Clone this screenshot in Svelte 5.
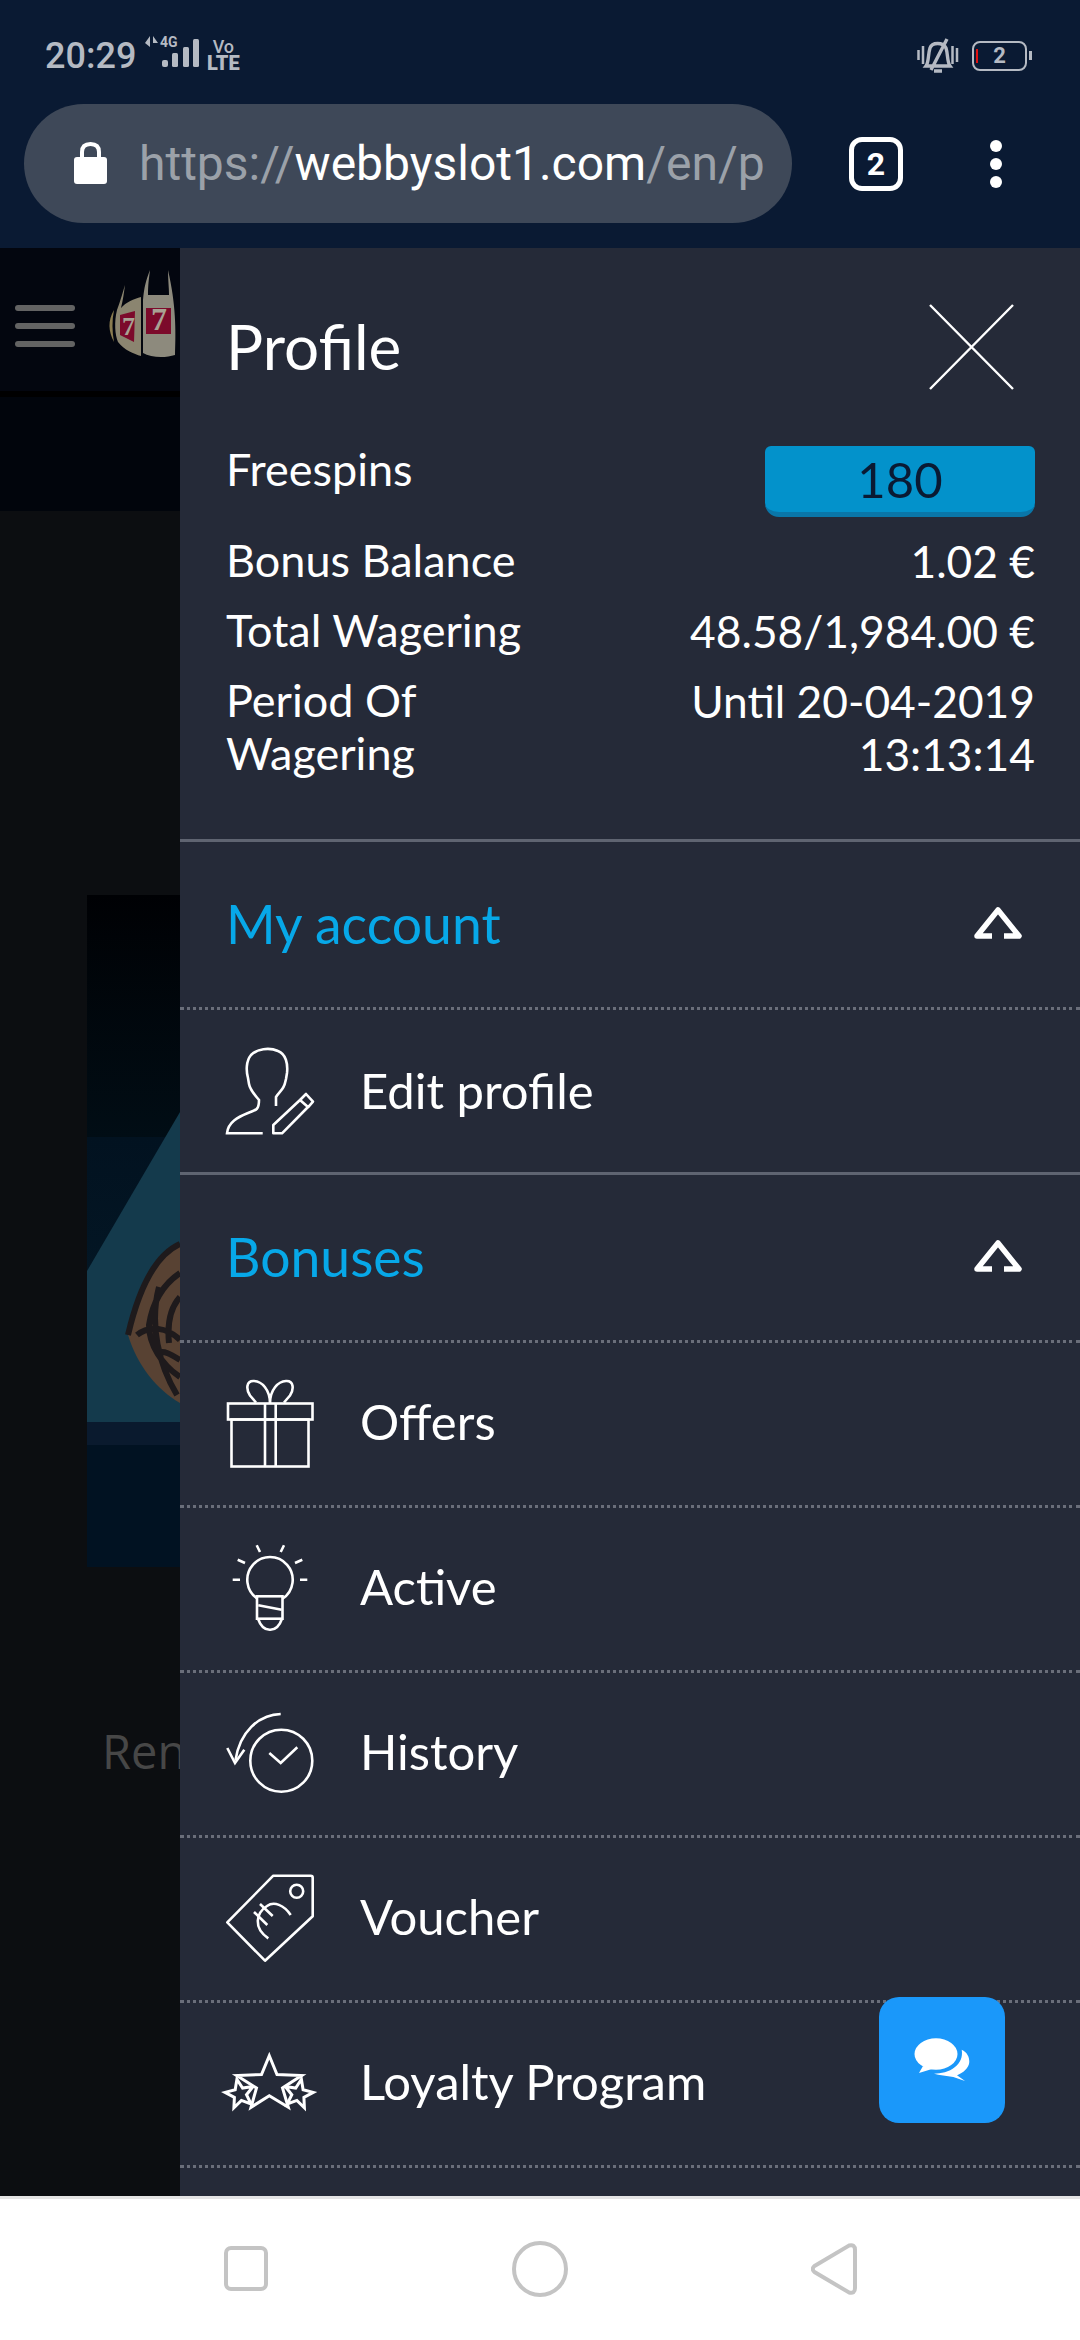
<script>
  function star(cx, cy, R, r, rot) {
    const pts = [];
    for (let i = 0; i < 10; i++) {
      const a = ((-90 + rot + i * 36) * Math.PI) / 180;
      const d = i % 2 ? r : R;
      pts.push((cx + d * Math.cos(a)).toFixed(1) + ',' + (cy + d * Math.sin(a)).toFixed(1));
    }
    return pts.join(' ');
  }
  const stats = [
    ['Bonus Balance', ['1.02 €']],
    ['Total Wagering', ['48.58/1,984.00 €']],
    ['Period Of Wagering', ['Until 20-04-2019', '13:13:14']]
  ];
</script>

<div class="screen">
  <header class="chrome">
    <div class="status">
      <span class="time">20:29</span>
      <svg class="signal" width="60" height="40" viewBox="0 0 60 40">
        <path d="M3 10 8 3V14ZM11 3 16 10 11 10ZM10 3V14" fill="#b5bac3" />
        <text x="18" y="14" class="net">4G</text>
        <rect x="20" y="27" width="6" height="7" rx="2" fill="#b5bac3" />
        <rect x="30" y="20" width="6" height="14" rx="1.5" fill="#b5bac3" />
        <rect x="41" y="14" width="6" height="20" rx="1.5" fill="#b5bac3" />
        <rect x="51" y="6" width="6" height="28" rx="1.5" fill="#b5bac3" />
      </svg>
      <span class="volte"><span>Vo</span><b>LTE</b></span>
      <span class="spacer"></span>
      <svg class="bell" width="42" height="36" viewBox="0 0 42 36">
        <path d="M1.5 12V22M40 10V24M6 8V26M35.5 8V26" stroke="#b5bac3" stroke-width="2.5" fill="none" />
        <path d="M9 28C12 24 11 16 13 10 15 4 26 4 29 10 31 16 30 24 33 28ZM14 32 30 1M17 33H25" stroke="#b5bac3" stroke-width="3.4" fill="none" />
      </svg>
      <span class="battery"><i></i>2</span>
      <span class="nub"></span>
    </div>
    <div class="urlrow">
      <div class="pill">
        <svg class="lock" width="33" height="42" viewBox="0 0 33 42">
          <path d="M8 16V10C8 4 12 2 16.5 2S25 4 25 10V16" fill="none" stroke="#fff" stroke-width="4" />
          <rect y="15" width="33" height="27" rx="3" fill="#fff" />
        </svg>
        <span class="url"><span class="dim">https://</span>webbyslot1.com<span class="dim">/en/p</span></span>
      </div>
      <span class="tabs">2</span>
      <span class="dots"><i></i><i></i><i></i></span>
    </div>
  </header>

  <main class="stage">
    <div class="page">
      <div class="site-head">
        <span class="burger"><i></i><i></i><i></i></span>
        <svg class="logo" width="72" height="90" viewBox="0 0 72 90">
          <path d="M8 40Q-1 55 8 72 5 55 8 40Z" fill="#8a7c50" />
          <path d="M19 15C16 25 14 32 11 40 8 52 9 65 12 72 18 80 28 84 35 86L35 27C28 29 20 32 15 38 17 30 18 22 19 15Z" fill="#8b8570" />
          <path d="M14 45 29 41 28 72 14 65Z" fill="#7c0a2b" />
          <path d="M44 0C40 10 38 18 37 30L37 83C45 88 60 88 69 85 70 60 70 35 62 0 62 10 63 18 63 25L42 25C42 15 43 8 44 0Z" fill="#8d8a7d" />
          <rect x="40" y="38" width="25" height="26" fill="#7c0a2b" />
          <text x="16" y="65" class="seven">7</text>
          <text x="45" y="60" class="seven big">7</text>
        </svg>
      </div>
      <div class="site-band"></div>
      <div class="hero">
        <svg width="93" height="672" viewBox="0 0 93 672">
          <defs>
            <linearGradient id="sky" x1="0" y1="0" x2="0" y2="1">
              <stop offset="0" stop-color="#000104" />
              <stop offset="0.64" stop-color="#010d15" />
              <stop offset="0.641" stop-color="#021220" />
              <stop offset="1" stop-color="#031624" />
            </linearGradient>
          </defs>
          <rect width="93" height="378" fill="url(#sky)" />
          <path d="M0 376 93 217V527H0Z" fill="#143a4c" />
          <rect y="527" width="93" height="23" fill="#0a1a2e" />
          <rect y="550" width="93" height="122" fill="#011222" />
          <path d="M93 349C75 357 55 380 41 440 50 470 70 495 93 508Z" fill="#584233" />
          <path d="M93 349C75 357 55 380 41 440M93 378C78 388 66 405 62 430 62 450 75 470 93 482M93 402C84 412 80 428 82 448M50 440C62 430 80 432 93 445M72 392C62 430 72 470 90 500M93 465C85 460 78 455 70 458" fill="none" stroke="#1e1a1c" stroke-width="6" />
        </svg>
      </div>
      <p class="ren">Rent</p>
    </div>

    <aside class="drawer">
      <div class="profile">
        <div class="title-row">
          <h1>Profile</h1>
          <svg class="close" width="85" height="86" viewBox="0 0 85 86">
            <path d="M1 1 84 85M84 1 1 85" stroke="#fff" stroke-width="2.4" fill="none" />
          </svg>
        </div>
        <dl class="stats">
          <div class="stat">
            <dt>Freespins</dt>
            <dd class="badge">180</dd>
          </div>
          {#each stats as [label, values]}
            <div class="stat">
              <dt>{label}</dt>
              <dd>{#each values as v}<span>{v}</span>{/each}</dd>
            </div>
          {/each}
        </dl>
      </div>

      <section>
        <div class="sec-head">
          <h2>My account</h2>
          <svg width="48" height="32" viewBox="0 0 48 32">
            <path d="M18 29H3L24 3 45 29H30" fill="none" stroke="#fff" stroke-width="5.5" stroke-linejoin="round" />
          </svg>
        </div>
        <a class="item last">
          <svg class="ico" width="90" height="90" viewBox="0 0 90 90">
            <path d="M36.7 87.3H1C2 76 12 71 22 67 31 64 33 63 33 54 28 48 24 44 23 38L22 32C20 25 20 15 25 9 31 3 43 1 52 5 60 8 62 18 61 27L60 33 59 37C58 43 53 46 50 51V60" />
            <path d="M47.3 87.3V79L74 54 82 61 56 87.3ZM74 54 80 48 87 55.7 82 61.3" stroke-linejoin="round" />
          </svg>
          <span>Edit profile</span>
        </a>
      </section>

      <section>
        <div class="sec-head">
          <h2>Bonuses</h2>
          <svg width="48" height="32" viewBox="0 0 48 32">
            <path d="M18 29H3L24 3 45 29H30" fill="none" stroke="#fff" stroke-width="5.5" stroke-linejoin="round" />
          </svg>
        </div>
        <a class="item">
          <svg class="ico" width="90" height="90" viewBox="0 -1.5 90 90">
            <rect x="2" y="24" width="84.5" height="16" />
            <rect x="5.5" y="40" width="77" height="47" />
            <path d="M39 24V87M49.7 24V87" />
            <path d="M44 24C44 10 36 2 28 1.5 20 1 20 10 24 16L30 23M44 24C44 10 52 2 60 1.5 68 1 68 10 64 16L58 23" />
          </svg>
          <span>Offers</span>
        </a>
        <a class="item">
          <svg class="ico" width="90" height="90" viewBox="0 0 90 90">
            <path d="M31.5 55.7A22.7 22.7 0 1 1 56.5 55.7" />
            <rect x="31" y="53.3" width="25.5" height="22.4" />
            <path d="M32.3 62.3 55.7 66.7M32 75.7Q36 87 44 86.7 52 87 56 75.7" />
            <path d="M30.7 2.3 34 9M58 2.3 54.7 9M11.7 16.7 19 20M76.3 16.7 69 20M6.7 36.7H14M74 36.7H81.3" />
          </svg>
          <span>Active</span>
        </a>
        <a class="item">
          <svg class="ico" width="90" height="90" viewBox="0 0 90 90">
            <circle cx="55.3" cy="52.7" r="31" />
            <path d="M43.3 45 54.7 55 71.3 39.3" />
            <path d="M54.7 6C32 7 14 24 9.5 52" />
            <path d="M1.3 40 9 55 18.3 41.7" />
          </svg>
          <span>History</span>
        </a>
        <a class="item">
          <svg class="ico" width="90" height="90" viewBox="0 0 90 90">
            <path d="M47.3 2.7H84.7Q86.7 2.7 86.7 4.7V43.3L39 87.7 1.3 49.3Z" stroke-linejoin="round" />
            <circle cx="70.7" cy="18.3" r="6.5" />
            <path d="M64.7 42C58 32 48 28 41 33 30 40 27 55 42.3 65.3" />
            <path d="M34 31 46.7 43M28 39 41.3 52" />
          </svg>
          <span>Voucher</span>
        </a>
        <a class="item">
          <svg class="ico stars" width="90" height="90" viewBox="0 0 90 90">
            <polygon points={star(14, 56, 15, 6.5, -12)} />
            <polygon points={star(72.3, 56, 15, 6.5, 12)} />
            <path d="M43.3 17.7 51 36.5 75.7 37.5 56.5 50 62.3 69.3 43.3 57.7 25 69.3 30.5 50 10.7 37.5 35.5 36.5Z" />
          </svg>
          <span>Loyalty Program</span>
        </a>
      </section>
    </aside>

    <button class="chat" aria-label="Chat">
      <svg width="126" height="126" viewBox="0 0 126 126">
        <ellipse cx="57" cy="57" rx="21.5" ry="15.7" fill="#fff" />
        <path d="M44 69 40 76 53 72Z" fill="#fff" />
        <path d="M82.7 52.7C88 55 90.5 60 90.3 65 90 71 84 76 78 78.3L86 84 74.3 80C68 79 60 78 55 76.7 62 76.5 70 75 76 70 81 66 84 60 82.7 52.7Z" fill="#fff" />
      </svg>
    </button>
  </main>

  <nav class="sysnav">
    <svg width="44" height="45" viewBox="0 0 44 45"><rect x="2" y="2" width="40" height="41" rx="5" /></svg>
    <svg width="56" height="56" viewBox="0 0 56 56"><circle cx="28" cy="28" r="26" /></svg>
    <svg width="46" height="52" viewBox="0 0 46 52"><path d="M3.5 23 38 2.5Q44 1 44 7V45Q44 51 38 49.5L3.5 29Q0 26 3.5 23Z" /></svg>
  </nav>
</div>

<style>
  :global(body) { margin: 0; background: #000; }
  .screen { width: 1080px; height: 2340px; display: flex; flex-direction: column; overflow: hidden; font-family: Lato, sans-serif; }

  .chrome { height: 248px; background: #0a1a33; flex: none; }
  .status { height: 104px; display: flex; align-items: center; padding: 7px 48px 0 45px; box-sizing: border-box; color: #b5bac3; font-family: Roboto, sans-serif; }
  .time { font-size: 36px; font-weight: 500; line-height: 40px; }
  .signal { margin-left: 6px; margin-top: -6px; }
  .net { font: 700 14px Roboto, sans-serif; fill: #b5bac3; }
  .volte { display: flex; flex-direction: column; margin-left: 3px; align-items: center; width: 36px; line-height: 17px; margin-top: -2px; }
  .volte span { font-size: 18px; font-weight: 500; }
  .volte b { font-size: 20px; font-weight: 900; }
  .spacer { flex: 1; }
  .bell { margin-right: 13px; }
  .battery { position: relative; width: 55px; height: 30px; box-sizing: border-box; border: 2.5px solid #b5bac3; border-radius: 8px; font-size: 22px; font-weight: 700; text-align: center; line-height: 25px; }
  .battery i { position: absolute; left: 2px; top: 6px; width: 2px; height: 14px; background: #e01010; }
  .nub { width: 3px; height: 9px; margin-left: 2px; background: #b5bac3; }

  .urlrow { display: flex; align-items: center; height: 119px; padding-left: 24px; }
  .pill { width: 768px; height: 119px; border-radius: 60px; background: #3e4858; display: flex; align-items: center; box-sizing: border-box; padding: 0 29px 0 50px; flex: none; }
  .lock { flex: none; margin-top: -2px; }
  .url { margin-left: 32px; font: 400 48px/60px Roboto, sans-serif; color: #fff; white-space: nowrap; flex: 1; }
  .dim { color: #9ba1a9; }
  .tabs { margin-left: 57px; width: 54px; height: 54px; box-sizing: border-box; border: 5px solid #fff; border-radius: 13px; color: #fff; font: 700 32px/44px Roboto, sans-serif; text-align: center; }
  .dots { margin-left: 87px; display: flex; flex-direction: column; gap: 6px; }
  .dots i { width: 12px; height: 12px; border-radius: 50%; background: #fff; }

  .stage { position: relative; flex: 1; overflow: hidden; background: #0c0e11; }

  .site-head { height: 149px; background: #03060f; border-bottom: 6px solid #000; display: flex; align-items: flex-start; padding-left: 15px; box-sizing: border-box; }
  .burger { display: flex; flex-direction: column; gap: 12px; margin-top: 57px; }
  .burger i { width: 60px; height: 6px; border-radius: 3px; background: #636363; }
  .logo { margin-left: 31px; margin-top: 22px; flex: none; overflow: visible; }
  .seven { font: 700 26px "Liberation Serif", serif; fill: #a8a294; }
  .big { font-size: 32px; }
  .site-band { height: 114px; background: #01050c; }
  .hero { margin: 384px 0 0 87px; height: 672px; line-height: 0; }
  .hero svg { display: block; }
  .ren { margin: 156px 0 0 102px; font: 400 47px/56px "Open Sans", sans-serif; color: #474747; }

  .drawer { position: absolute; top: 0; bottom: 0; left: 180px; right: 0; background: #252a38; color: #fff; overflow: hidden; }
  .profile { height: 591px; box-sizing: border-box; padding: 0 45px 0 46px; }
  .title-row { height: 195px; display: flex; justify-content: space-between; }
  h1 { margin: 63px 0 0; font-size: 62px; font-weight: 400; line-height: 70px; }
  .close { margin: 56px 21px 0 0; }
  .stats { margin: 0; display: flex; flex-direction: column; gap: 17px; }
  .stat { display: flex; justify-content: space-between; align-items: flex-start; font-size: 45px; line-height: 53px; }
  .stat dt { max-width: 300px; }
  .stat dd { margin: 0; display: flex; flex-direction: column; align-items: flex-end; font-size: 44.3px; }
  .stat .badge { width: 270px; height: 71px; margin-top: 3px; box-sizing: border-box; background: #0392cb; border-bottom: 5px solid #0a76a8; border-radius: 6px 6px 14px 14px; color: #0a1a33; font-size: 49px; line-height: 66px; align-items: center; }

  section { border-top: 3px solid #5f6471; }
  .sec-head { height: 168px; box-sizing: border-box; border-bottom: 3px dotted #6a6e7a; display: flex; align-items: center; justify-content: space-between; padding: 0 58px 3px 46px; }
  h2 { margin: 0; font-size: 53.5px; font-weight: 400; color: #07a8e8; }
  .item { height: 165px; box-sizing: border-box; border-bottom: 3px dotted #6a6e7a; display: flex; align-items: center; padding-left: 46px; font-size: 49px; padding-bottom: 3px; }
  .item span { margin-top: -3px; }
  .item.last { height: 162px; border-bottom: 0; padding-bottom: 0; }
  .ico { flex: none; margin-right: 44px; fill: none; stroke: #fff; stroke-width: 2.6; overflow: visible; }
  .stars { stroke-width: 3; fill: #252a38; }

  .chat { position: absolute; right: 75px; bottom: 73px; width: 126px; height: 126px; padding: 0; border: 0; border-radius: 20px; background: #1a98fa; }
  .chat svg { display: block; }

  .sysnav { height: 144px; flex: none; box-sizing: border-box; background: #fff; border-top: 3px solid #e4e4e4; display: grid; grid-template-columns: repeat(3, 294px); padding: 0 0 0 99px; align-items: center; justify-items: center; }
  .sysnav svg { fill: none; stroke: #c4c4c4; stroke-width: 4; margin-top: -2px; }
</style>
